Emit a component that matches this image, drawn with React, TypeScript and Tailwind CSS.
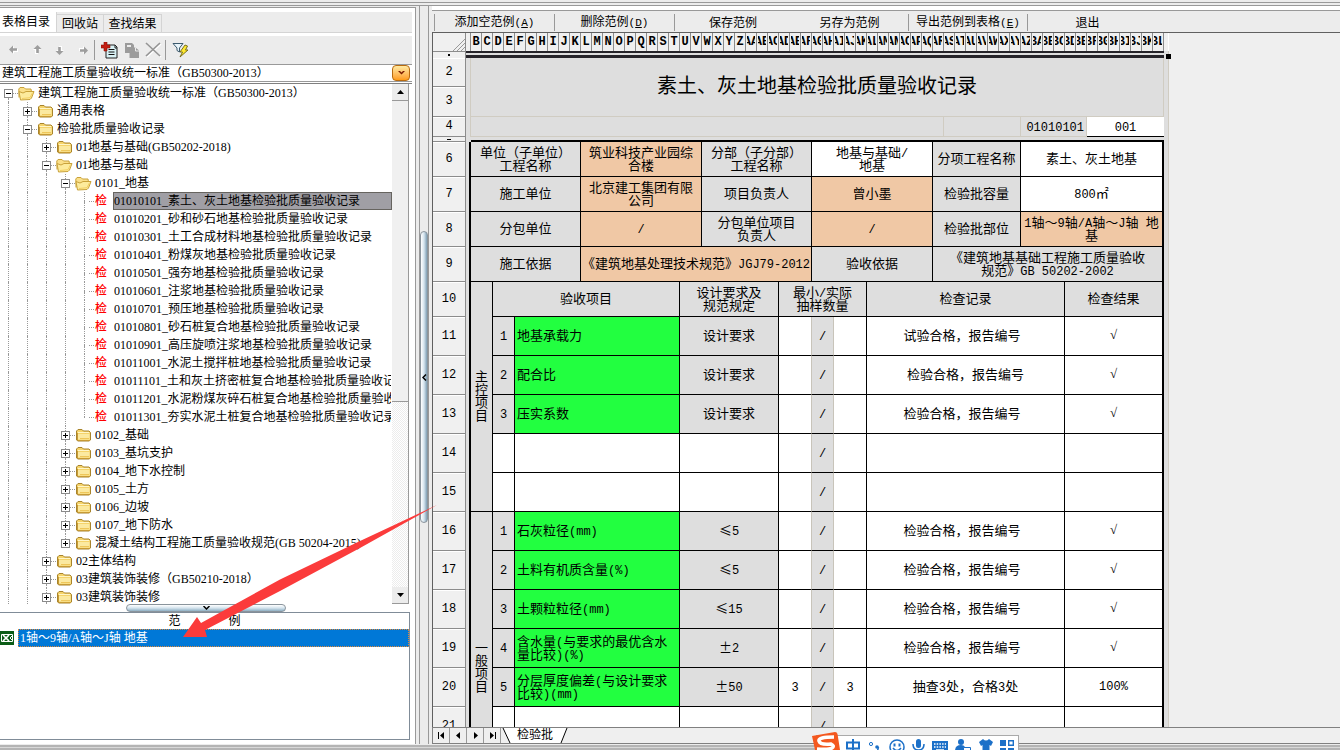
import React, { useState } from 'react';

type TreeNode = {
  level: number;
  label: string;
  kind: 'open' | 'closed' | 'leaf';
  expanded?: boolean;
  last?: boolean;
};

const STANDARD = '建筑工程施工质量验收统一标准（GB50300-2013）';

const LEAVES = [
  '01010101_素土、灰土地基检验批质量验收记录',
  '01010201_砂和砂石地基检验批质量验收记录',
  '01010301_土工合成材料地基检验批质量验收记录',
  '01010401_粉煤灰地基检验批质量验收记录',
  '01010501_强夯地基检验批质量验收记录',
  '01010601_注浆地基检验批质量验收记录',
  '01010701_预压地基检验批质量验收记录',
  '01010801_砂石桩复合地基检验批质量验收记录',
  '01010901_高压旋喷注浆地基检验批质量验收记录',
  '01011001_水泥土搅拌桩地基检验批质量验收记录',
  '01011101_土和灰土挤密桩复合地基检验批质量验收记录',
  '01011201_水泥粉煤灰碎石桩复合地基检验批质量验收记录',
  '01011301_夯实水泥土桩复合地基检验批质量验收记录',
];

const TREE: TreeNode[] = [
  { level: 0, label: STANDARD, kind: 'open', expanded: true },
  { level: 1, label: '通用表格', kind: 'closed' },
  { level: 1, label: '检验批质量验收记录', kind: 'closed', expanded: true },
  { level: 2, label: '01地基与基础(GB50202-2018)', kind: 'closed' },
  { level: 2, label: '01地基与基础', kind: 'open', expanded: true },
  { level: 3, label: '0101_地基', kind: 'open', expanded: true },
  ...LEAVES.map((label, i): TreeNode => ({ level: 4, label, kind: 'leaf', last: i === LEAVES.length - 1 })),
  { level: 3, label: '0102_基础', kind: 'closed' },
  { level: 3, label: '0103_基坑支护', kind: 'closed' },
  { level: 3, label: '0104_地下水控制', kind: 'closed' },
  { level: 3, label: '0105_土方', kind: 'closed' },
  { level: 3, label: '0106_边坡', kind: 'closed' },
  { level: 3, label: '0107_地下防水', kind: 'closed' },
  { level: 3, label: '混凝土结构工程施工质量验收规范(GB 50204-2015)', kind: 'closed', last: true },
  { level: 2, label: '02主体结构', kind: 'closed' },
  { level: 2, label: '03建筑装饰装修（GB50210-2018）', kind: 'closed' },
  { level: 2, label: '03建筑装饰装修', kind: 'closed' },
];

type ItemRow = {
  row: number;
  no?: string;
  item?: string;
  spec?: string;
  min?: string;
  real?: string;
  record?: string;
  result?: string;
};

const MAIN_ITEMS: ItemRow[] = [
  { row: 11, no: '1', item: '地基承载力', spec: '设计要求', record: '试验合格，报告编号 ', result: '√' },
  { row: 12, no: '2', item: '配合比', spec: '设计要求', record: '检验合格，报告编号', result: '√' },
  { row: 13, no: '3', item: '压实系数', spec: '设计要求', record: '检验合格，报告编号 ', result: '√' },
  { row: 14 },
  { row: 15 },
];

const GENERAL_ITEMS: ItemRow[] = [
  { row: 16, no: '1', item: '石灰粒径(mm)', spec: '≤5', record: '检验合格，报告编号 ', result: '√' },
  { row: 17, no: '2', item: '土料有机质含量(%)', spec: '≤5', record: '检验合格，报告编号 ', result: '√' },
  { row: 18, no: '3', item: '土颗粒粒径(mm)', spec: '≤15', record: '检验合格，报告编号 ', result: '√' },
  { row: 19, no: '4', item: '含水量(与要求的最优含水\n量比较)(%)', spec: '±2', record: '检验合格，报告编号 ', result: '√' },
  { row: 20, no: '5', item: '分层厚度偏差(与设计要求\n比较)(mm)', spec: '±50', min: '3', real: '3', record: '抽查3处，合格3处', result: '100%' },
  { row: 21 },
  { row: 22 },
  { row: 23 },
];

const columnName = (n: number): string =>
  n < 26 ? String.fromCharCode(65 + n) : columnName(Math.floor(n / 26) - 1) + String.fromCharCode(65 + (n % 26));

const COLUMNS = Array.from({ length: 63 }, (_, i) => columnName(i + 1));

// Latin runs use the monospaced face one size down so they sit well beside the Chinese
const Mixed = ({ text }: { text: string }) => (
  <>
    {text.split(/([\x20-\x7e]+)/).map((part, i) =>
      i % 2 ? (
        <span key={i} className="font-['Liberation_Mono','Noto_Sans_CJK_SC',monospace] text-xs leading-[0px]">{part}</span>
      ) : (
        part
      )
    )}
  </>
);

const ClosedFolder = () => (
  <svg width="17" height="14" viewBox="0 0 17 14" className="shrink-0">
    <path d="M1.500 12V3L3 1.500h4L8.500 3H14l1.500 1.500V12L14 13H3z" fill="#f5d36a" stroke="#a8842c" />
    <path d="M3 4.500h11" stroke="#fff6c8" />
    <path d="M3 6h11.500v5.500H3z" fill="#fbe9a0" />
    <path d="M2.500 5v7M3 12.500h12" stroke="#c79a34" fill="none" />
    <path d="M5 10.500h9" stroke="#eec65a" />
  </svg>
);

const OpenFolder = () => (
  <svg width="17" height="15" viewBox="0 0 17 15" className="shrink-0">
    <path d="M1 11.500L.8 3 2 1.500h4L7.500 3H13l.5 3" fill="#fbe08a" stroke="#c9a23a" />
    <path d="M2.500 14L1 5.500 5 7l3-1.500h8L13.500 12 12 13.500z" fill="#fdeb9c" stroke="#c9a23a" strokeLinejoin="round" />
    <path d="M4 12.500l8-.8 2.500-5" stroke="#f3cf62" fill="none" />
  </svg>
);

const Guide = () => <span className="ml-2 mr-[10px] w-px shrink-0 self-stretch border-l border-dotted border-[#999]" />;

const TreeRow = ({ node, selected, onSelect }: { node: TreeNode; selected: boolean; onSelect: () => void }) => {
  const isLeaf = node.kind === 'leaf';
  return (
    <li className="flex h-[18px] items-center overflow-hidden" role="treeitem" aria-selected={selected}>
      {Array.from({ length: node.level }, (_, i) => <Guide key={i} />)}
      <span className="ml-1 flex w-[9px] shrink-0 flex-col items-center self-stretch">
        <span className={`flex-1 border-l border-dotted ${node.level === 0 ? 'border-transparent' : 'border-[#999]'}`} />
        {isLeaf ? (
          <span className="h-px w-px bg-[#999]" />
        ) : (
          <span className="flex size-[9px] items-center justify-center border border-[#8a8a8a] bg-white">
            <svg width="5" height="5" viewBox="0 0 5 5">
              <path d={node.expanded ? 'M0 2h5v1H0z' : 'M0 2h5v1H0zM2 0h1v5H2z'} fill="#000" />
            </svg>
          </span>
        )}
        <span className={`flex-1 border-l border-dotted ${node.last ? 'border-transparent' : 'border-[#999]'}`} />
      </span>
      <span className="w-[5px] shrink-0 border-t border-dotted border-[#999]" />
      {isLeaf ? (
        <span className="w-[17px] shrink-0 pl-px font-medium leading-[18px] text-[#f00]">检</span>
      ) : node.kind === 'open' ? (
        <OpenFolder />
      ) : (
        <ClosedFolder />
      )}
      <button
        onClick={onSelect}
        className={`ml-0.5 h-[18px] min-w-0 overflow-hidden whitespace-nowrap border text-left leading-4 ${
          selected ? 'flex-1 border-[#66645f] bg-[#a09fa5]' : 'border-transparent'
        }`}
      >
        {node.label}
      </button>
    </li>
  );
};

const ToolArrow = ({ turn, label }: { turn: string; label: string }) => (
  <button className="flex w-[23px] items-center justify-center" aria-label={label}>
    <svg width="10" height="10" viewBox="0 0 10 10" className={turn}>
      <path d="M1 5l4-4v3h4v3H5v2z" fill="#fff" />
      <path d="M0 4.500L4 .5v2.700h4v2.600H4v2.700z" fill="#9d9d9d" />
    </svg>
  </button>
);

const Toolbar = () => (
  <div className="flex h-7 items-stretch bg-[#ececec] pl-0.5">
    <ToolArrow turn="rotate-0" label="左移" />
    <ToolArrow turn="rotate-90" label="上移" />
    <ToolArrow turn="-rotate-90" label="下移" />
    <ToolArrow turn="rotate-180" label="右移" />
    <span className="my-1 w-px bg-[#999]" />
    <button className="flex w-7 items-center justify-center" aria-label="新建">
      <svg width="17" height="17" viewBox="0 0 17 17">
        <path d="M5 3h9l2 2v11H5z" fill="#d9f2f6" stroke="#222" />
        <path d="M7.500 7.500h6M7.500 10h6M7.500 12.500h6" stroke="#111" />
        <path d="M14 3v3h2" stroke="#222" fill="none" />
        <path d="M3 0h3v3h3v3H6v3H3V6H0V3h3z" fill="#c41e12" stroke="#8a1009" strokeWidth=".6" />
      </svg>
    </button>
    <button className="flex w-[18px] items-center justify-center" aria-label="复制">
      <svg width="17" height="17" viewBox="0 0 17 17">
        <path d="M1 1h7l2 2v8H1z" fill="#9b9b9b" />
        <path d="M3 3h4v2H3z" fill="#ececec" />
        <path d="M5.500 5.500h6l3.500 3V16H5.500z" fill="#9b9b9b" />
        <path d="M11.500 5.500V9H15" stroke="#ececec" fill="none" />
      </svg>
    </button>
    <button className="flex w-6 items-center justify-center" aria-label="删除">
      <svg width="17" height="16" viewBox="0 0 17 16">
        <path d="M2 2l14 13M16 2L2 15" stroke="#fff" strokeWidth="1.500" />
        <path d="M1 1l14 13M15 1L1 14" stroke="#959595" strokeWidth="1.700" />
      </svg>
    </button>
    <span className="my-1 w-px bg-[#999]" />
    <button className="flex w-7 items-center justify-center" aria-label="筛选">
      <svg width="17" height="17" viewBox="0 0 17 17">
        <path d="M1 1.500h10L7.500 6v4L5 8.500V6z" fill="#e8f4fa" stroke="#3c5a6e" />
        <path d="M13 3l2.500 1-2 4H16L8 15l2.500-5H8z" fill="#ffe92e" stroke="#6d6314" strokeWidth=".9" />
      </svg>
    </button>
  </div>
);

const CatalogPanel = () => {
  const [selected, setSelected] = useState(6);
  return (
    <aside className="flex w-[416px] shrink-0 flex-col border-t border-[#999]">
      <div className="mt-px flex min-h-0 flex-1 flex-col border-r border-t border-[#999] bg-white pb-1 pr-[3px] pt-1">
        <div className="flex h-[21px] items-end border-b border-[#d4d4d4] bg-[#ececec]" role="tablist">
          <button role="tab" className="h-5 w-[57px] border-r border-[#d4d4d4] bg-white pl-0.5 text-left">表格目录</button>
          <button role="tab" className="h-[18px] w-[47px] border-r border-t border-[#d4d4d4]">回收站</button>
          <button role="tab" className="h-[18px] w-[58px] border-r border-t border-[#d4d4d4]">查找结果</button>
        </div>
        <div className="mt-[3px]"><Toolbar /></div>

        <label className="relative block h-[18px] border-y border-[#999]">
          <span className="sr-only">标准</span>
          <select className="block h-4 w-full appearance-none bg-white pl-0.5 leading-4 outline-none">
            <option>{STANDARD}</option>
          </select>
          <span className="pointer-events-none absolute right-0.5 top-0 flex h-4 w-[18px] items-center justify-center rounded-sm border border-[#b86b10] bg-linear-to-b from-[#ffe9a0] to-[#ff9c12]">
            <svg width="7" height="4" viewBox="0 0 7 4"><path d="M0 0h2l1.500 1.500L5 0h2L3.500 3.500z" fill="#7a1a00" /></svg>
          </span>
        </label>

        <div className="mt-px flex h-[521px] min-h-0 shrink border-t border-[#808080]">
          <ul className="min-w-0 flex-1 overflow-hidden" role="tree">
            {TREE.map((node, i) => (
              <TreeRow key={i} node={node} selected={i === selected} onSelect={() => setSelected(i)} />
            ))}
          </ul>
          <div className="mr-[3px] flex w-[17px] flex-col border-r border-[#999] bg-[repeating-conic-gradient(#fff_0_25%,#ececec_0_50%)] bg-[length:2px_2px]">
            <button className="flex h-[17px] items-center justify-center border-b border-[#999] bg-[#ececec]" aria-label="向上滚动">
              <svg width="7" height="4" viewBox="0 0 7 4"><path d="M0 4L3.500 0 7 4z" /></svg>
            </button>
            <div className="h-[301px] border-b border-[#999] bg-[#f0f0f0]" />
            <div className="flex-1" />
            <button className="flex h-[17px] items-center justify-center border-b border-[#999] bg-[#ececec]" aria-label="向下滚动">
              <svg width="7" height="4" viewBox="0 0 7 4"><path d="M0 0l3.500 4L7 0z" /></svg>
            </button>
          </div>
        </div>

        <div className="flex h-2 shrink-0 justify-center">
          <div className="flex h-2 w-40 items-center justify-center rounded-sm border border-[#8a949c] bg-linear-to-b from-white via-[#d5e4ee] to-[#8fb0c4]">
            <svg width="7" height="4" viewBox="0 0 7 4"><path d="M.5 0l3 3 3-3" stroke="#000" strokeWidth="1.500" fill="none" /></svg>
          </div>
        </div>

        <div className="mr-0.5 min-h-0 flex-1 border-y border-r border-[#808c98] bg-white">
          <div className="flex h-4 items-center justify-center gap-12"><span>范</span><span>例</span></div>
          <button className="flex h-[18px] w-full items-center text-left">
            <svg width="14" height="14" viewBox="0 0 14 14" className="mr-1 shrink-0">
              <path d="M0 0h14v14H0z" fill="#0b5c16" />
              <path d="M1.500 3.500h11v7h-11z" fill="none" stroke="#fff" />
              <path d="M3 4l6 6M9 4l-6 6" stroke="#fff" strokeWidth="1.700" />
              <path d="M12 5l-2 2 2 2" stroke="#fff" fill="none" />
            </svg>
            <span className="h-[18px] flex-1 border border-dotted border-[#e0893a] bg-[#0078d7] pl-px leading-4 text-white">
              1轴～9轴/A轴～J轴 地基
            </span>
          </button>
        </div>
      </div>
    </aside>
  );
};

const VerticalSplitter = () => (
  <div className="flex w-4 shrink-0 border-t border-[#999] pl-[3px]">
    <div className="flex w-[10px] flex-col items-center border-x border-[#999]">
      <div className="h-[225px] shrink-0" />
      <button className="flex h-[292px] w-2 shrink-0 items-center justify-center rounded-sm border border-[#8a949c] bg-linear-to-r from-white via-[#d5e4ee] to-[#7f9fb4]" aria-label="折叠">
        <svg width="5" height="7" viewBox="0 0 5 7"><path d="M4 .5l-3 3 3 3" stroke="#000" strokeWidth="1.500" fill="none" /></svg>
      </button>
    </div>
  </div>
);

const MENU: { label: string; hotkey?: string; width: string }[] = [
  { label: '添加空范例', hotkey: 'A', width: 'w-[120px] border-l' },
  { label: '删除范例', hotkey: 'D', width: 'w-[120px] border-l' },
  { label: '保存范例', width: 'w-[117px] border-l' },
  { label: '另存为范例', width: 'w-[117px]' },
  { label: '导出范例到表格', hotkey: 'E', width: 'w-[119px] border-l' },
  { label: '退出', width: 'w-[120px] border-l' },
];

type CellProps = {
  text?: string;
  span?: number;
  rows?: number;
  tone?: string;
  edge?: string;
};

const GRAY = 'bg-[#dedede]';
const PEACH = 'bg-[#f0c8a5]';
const GREEN = 'bg-[#22ff40]';

const Cell = ({ text = '', span, rows, tone = GRAY, edge = 'border-r border-b border-black text-center' }: CellProps) => (
  <td colSpan={span} rowSpan={rows} className={`whitespace-pre p-0 pb-[3px] align-middle ${edge} ${tone}`}>
    <Mixed text={text} />
  </td>
);

const END = 'border-b border-r-2 border-black text-center';

// Row number plus the narrow hidden column A
const RowHead = ({ n, height }: { n: number; height: string }) => (
  <>
    <th className={`${height} border-b border-r border-[#8c8c8c] bg-[#f0f0f0] p-0 font-['Liberation_Mono',monospace] text-xs font-normal leading-[13px] shadow-[inset_0_1px_0_#fff]`}>{n}</th>
    <td className={`p-0 ${GRAY} ${n > 5 ? 'border-r-2 border-black' : 'border-r border-[#d0ccc2]'}`} />
  </>
);

const ItemCells = ({ data }: { data: ItemRow }) => {
  const filled = Boolean(data.no);
  return (
    <>
      <Cell text={data.no} tone={filled ? GRAY : 'bg-white'} />
      <Cell text={data.item} span={2} tone={filled ? GREEN : 'bg-white'} edge="border-r border-b border-black pl-0.5 text-left" />
      <Cell text={data.spec} span={2} tone={filled ? GRAY : 'bg-white'} />
      <Cell text={data.min} tone="bg-white" edge="border-b border-b-black border-r border-r-[#c8c4ba] text-center" />
      <Cell text="/" edge="border-b border-b-black border-r border-r-[#c8c4ba] text-center" />
      <Cell text={data.real} tone="bg-white" />
      <Cell text={data.record} span={4} tone="bg-white" />
      <Cell
        text={data.result}
        span={2}
        tone="bg-white"
        edge="border-b border-r-2 border-black text-center font-['Liberation_Serif',serif]"
      />
    </>
  );
};

const Sheet = () => (
  <div className="w-max border-r border-[#d0ccc2] bg-[#dedede] pr-1">
    <table className="w-[731px] table-fixed border-separate border-spacing-0 font-['Noto_Sans_CJK_SC',sans-serif] text-[13px] leading-[13px]">
      <colgroup>
        <col className="w-[33px]" />
        <col className="w-[5px]" />
        <col className="w-[22px]" />
        <col className="w-[22px]" />
        <col className="w-[66px]" />
        <col className="w-[99px]" />
        <col className="w-[22px]" />
        <col className="w-[77px]" />
        <col className="w-[33px]" />
        <col className="w-[22px]" />
        <col className="w-[33px]" />
        <col className="w-[66px]" />
        <col className="w-[11px]" />
        <col className="w-[77px]" />
        <col className="w-[44px]" />
        <col className="w-[22px]" />
        <col className="w-[77px]" />
      </colgroup>
      <tbody>
        <tr>
          <th className="h-[7px] border-r border-t border-[#8c8c8c] bg-[#f0f0f0] p-0">
            <div className="mx-auto size-0.5 bg-black" />
          </th>
          <td colSpan={16} className="border-b-[3px] border-t-2 border-[#26242a] p-0" />
        </tr>
        <tr>
          <RowHead n={2} height="h-[29px]" />
          <td colSpan={15} rowSpan={2} className="border-b border-r border-[#d0ccc2] p-0 pb-1 text-center text-xl leading-5">
            素土、灰土地基检验批质量验收记录
          </td>
        </tr>
        <tr><RowHead n={3} height="h-[30px]" /></tr>
        <tr>
          <RowHead n={4} height="h-5" />
          <Cell span={11} edge="border-b border-r border-[#d0ccc2]" />
          <Cell edge="border-b border-r border-[#d0ccc2]" />
          <Cell span={2} text="01010101" edge="border-b border-r border-[#d0ccc2] pr-0.5 text-right" />
          <Cell text="001" tone="bg-white" edge="border-b border-black text-center" />
        </tr>
        <tr>
          <th className="h-[5px] border-b border-r border-[#8c8c8c] bg-[#f0f0f0] p-0">
            <div className="mx-auto h-px w-1 bg-black" />
          </th>
          <td className="p-0" />
          <td colSpan={15} className="border-b-2 border-black p-0" />
        </tr>
        <tr>
          <RowHead n={6} height="h-[35px]" />
          <Cell span={3} text={'单位（子单位）\n工程名称'} />
          <Cell span={2} text={'筑业科技产业园综\n合楼'} tone={PEACH} />
          <Cell span={2} text={'分部（子分部）\n工程名称'} />
          <Cell span={3} text={'地基与基础/\n地基'} tone="bg-white" />
          <Cell span={2} text="分项工程名称" />
          <Cell span={3} text="素土、灰土地基" tone="bg-white" edge={END} />
        </tr>
        <tr>
          <RowHead n={7} height="h-[35px]" />
          <Cell span={3} text="施工单位" />
          <Cell span={2} text={'北京建工集团有限\n公司'} tone={PEACH} />
          <Cell span={2} text="项目负责人" />
          <Cell span={3} text="曾小墨" tone={PEACH} />
          <Cell span={2} text="检验批容量" />
          <Cell span={3} text="800㎡" tone="bg-white" edge={END} />
        </tr>
        <tr>
          <RowHead n={8} height="h-[35px]" />
          <Cell span={3} text="分包单位" />
          <Cell span={2} text="/" tone={PEACH} />
          <Cell span={2} text={'分包单位项目\n负责人'} />
          <Cell span={3} text="/" tone={PEACH} />
          <Cell span={2} text="检验批部位" />
          <Cell span={3} text={'1轴～9轴/A轴～J轴 地\n基'} tone={PEACH} edge={END} />
        </tr>
        <tr>
          <RowHead n={9} height="h-[35px]" />
          <Cell span={3} text="施工依据" />
          <Cell span={4} text="《建筑地基处理技术规范》JGJ79-2012" tone={PEACH} />
          <Cell span={3} text="验收依据" />
          <Cell span={5} text={'《建筑地基基础工程施工质量验收\n规范》GB 50202-2002'} edge={END} />
        </tr>
        <tr>
          <RowHead n={10} height="h-[35px]" />
          <Cell rows={6} text={'主\n控\n项\n目'} />
          <Cell span={3} text="验收项目" />
          <Cell span={2} text={'设计要求及\n规范规定'} />
          <Cell span={3} text={'最小/实际\n抽样数量'} />
          <Cell span={4} text="检查记录" />
          <Cell span={2} text="检查结果" edge={END} />
        </tr>
        {MAIN_ITEMS.map((item) => (
          <tr key={item.row}>
            <RowHead n={item.row} height="h-[39px]" />
            <ItemCells data={item} />
          </tr>
        ))}
        {GENERAL_ITEMS.map((item, i) => (
          <tr key={item.row}>
            <RowHead n={item.row} height="h-[39px]" />
            {i === 0 && <Cell rows={GENERAL_ITEMS.length} text={'一\n般\n项\n目'} />}
            <ItemCells data={item} />
          </tr>
        ))}
      </tbody>
    </table>
  </div>
);

const NAV = [
  { label: '第一张', d: 'M1 1h1v7H1zM7 1v7L3 4.500z' },
  { label: '上一张', d: 'M6 1v7L2 4.500z' },
  { label: '下一张', d: 'M3 1v7l4-3.500z' },
  { label: '最后一张', d: 'M2 1v7l4-3.500zM7 1h1v7H7z' },
];

const SheetPanel = () => (
  <section className="flex min-w-0 flex-1 flex-col border-t border-[#999]">
    <div className="h-1 bg-white" />
    <nav className="flex h-[22px] shrink-0 border-t border-[#999] pb-px pl-0.5 pt-[3px]">
      {MENU.map((m) => (
        <button key={m.label} className={`${m.width} border-[#999]`}>
          {m.label}
          {m.hotkey && <span className="font-['Liberation_Mono',monospace] text-[11px]">(<u>{m.hotkey}</u>)</span>}
        </button>
      ))}
    </nav>
    <div className="relative min-h-0 flex-1 overflow-hidden border-l border-t border-[#606060] bg-[#efefef]">
      <div className="flex h-[18px] w-[736px] border-r border-white bg-[#f0f0f0]">
        <div className="flex w-[33px] shrink-0 items-end justify-end border-r border-[#8c8c8c]">
          <svg width="12" height="12" viewBox="0 0 12 12">
            <path d="M0 12L12 0M4 12l8-8M8 12l4-4" stroke="#999" />
          </svg>
        </div>
        <div className="w-[5px] shrink-0 border-r border-[#8c8c8c]" />
        {COLUMNS.map((name) => (
          <div key={name} className="flex w-[11px] shrink-0 items-center justify-center border-r border-[#8c8c8c] font-['Liberation_Mono',monospace] text-xs font-bold">
            <span className="flex w-2 justify-center overflow-hidden">{name}</span>
          </div>
        ))}
      </div>
      <Sheet />
      {/* fill handle of the active cell */}
      <span className="absolute left-[733px] top-[21px] size-[5px] bg-black" />
    </div>
    <div className="flex h-[17px] shrink-0 border-b border-l border-t border-[#808080] bg-[#efefef]">
      {NAV.map((n) => (
        <button key={n.label} aria-label={n.label} className="flex w-[17px] items-center justify-center border-r border-[#999]">
          <svg width="9" height="9" viewBox="0 0 9 9"><path d={n.d} /></svg>
        </button>
      ))}
      <svg width="12" height="15" viewBox="0 0 12 15"><path d="M2 0h10v15H8z" fill="#fff" /><path d="M2 0l7 15" stroke="#000" /></svg>
      <button className="bg-white px-1 leading-[15px]">检验批</button>
      <svg width="12" height="15" viewBox="0 0 12 15"><path d="M0 0h10L4 15H0z" fill="#fff" /><path d="M10 0L4 15" stroke="#000" /></svg>
    </div>
  </section>
);

const RedArrow = () => (
  <svg className="pointer-events-none absolute left-[180px] top-[500px]" width="262" height="142" viewBox="0 0 262 142">
    <path d="M3 137l14-20 4 6L100 79.500 180 41 257 5 180 48 100 91 25 130l2 7z" fill="#fb3b3b" />
  </svg>
);

const ImeBar = () => (
  <div className="absolute bottom-0 left-[812px] flex h-[18px] items-end overflow-hidden">
    <svg width="28" height="18" viewBox="0 0 28 18" className="z-10 -mr-6 shrink-0">
      <path d="M0 4L23 0q2 0 2.500 2L28 18H3z" fill="#f4581f" />
      <path d="M22 5Q6 5 7 9t12 3q4 2 1 4t-15 1" stroke="#fff" strokeWidth="3.500" fill="none" />
    </svg>
    <div className="flex h-[15px] items-start gap-[7px] border-r border-t border-[#aaa] bg-white pl-[30px] pr-1 pt-[3px] text-[#1c70c8]">
      <svg width="14" height="14" viewBox="0 0 14 14"><path d="M1 3.500h12v6H1zM7 0v14" stroke="currentColor" strokeWidth="2" fill="none" /></svg>
      <svg width="15" height="14" viewBox="0 0 15 14"><circle cx="4" cy="5" r="1.600" stroke="currentColor" fill="none" /><circle cx="10" cy="8" r="1.800" fill="currentColor" /><path d="M11.500 8l-1 4" stroke="currentColor" strokeWidth="1.500" /></svg>
      <svg width="16" height="16" viewBox="0 0 16 16"><circle cx="8" cy="8" r="7" stroke="currentColor" strokeWidth="1.500" fill="none" /><path d="M5.500 4.500v3M10.500 4.500v3" stroke="currentColor" strokeWidth="2" /><path d="M4 9q4 5 8 0" stroke="currentColor" strokeWidth="1.500" fill="none" /></svg>
      <svg width="13" height="14" viewBox="0 0 13 14"><rect x="4" y="0" width="5" height="9" rx="2.500" fill="currentColor" /><path d="M1 5q0 6 5.500 6T12 5M6.500 11v3" stroke="currentColor" strokeWidth="1.500" fill="none" /></svg>
      <svg width="16" height="14" viewBox="0 0 16 14"><path d="M0 2h16v12H0z" fill="currentColor" /><path d="M2 5h12M2 8h12" stroke="#fff" strokeWidth="1.500" strokeDasharray="1.500 1.200" /><path d="M4 11h8" stroke="#fff" strokeWidth="1.500" /></svg>
      <svg width="17" height="14" viewBox="0 0 17 14"><circle cx="6" cy="3" r="3" fill="currentColor" /><path d="M0 12q0-6 6-6 3 0 4 2v4z" fill="currentColor" /><path d="M8.500 8.500h7V13h-7z" fill="#fff" stroke="currentColor" /></svg>
      <svg width="14" height="14" viewBox="0 0 14 14"><path d="M4 0q3 3 6 0l4 3-2 4-1.500-1V14h-7V6L2 7 0 3z" fill="currentColor" /></svg>
      <svg width="14" height="14" viewBox="0 0 14 14"><path d="M0 1h6v6H0zM0 9h6v5H0zM8 9h6v5H8z" fill="currentColor" /><path d="M8.700 1.700h4.600v4.600H8.700z" stroke="currentColor" strokeWidth="1.400" fill="none" /></svg>
    </div>
  </div>
);

const App: React.FC = () => (
  <div className="relative flex h-screen flex-col overflow-hidden bg-[#ececec] font-['Liberation_Serif','Noto_Sans_CJK_SC',serif] text-xs text-black">
    <div className="mb-0.5 h-[3px] shrink-0 border-b border-[#999]" />
    <main className="flex min-h-0 flex-1">
      <CatalogPanel />
      <VerticalSplitter />
      <SheetPanel />
    </main>
    <div className="mt-px h-[5px] shrink-0 border-y-2 border-[#b4b4b4] bg-[#d8d8d8]" />
    <RedArrow />
    <ImeBar />
  </div>
);

export default App;
